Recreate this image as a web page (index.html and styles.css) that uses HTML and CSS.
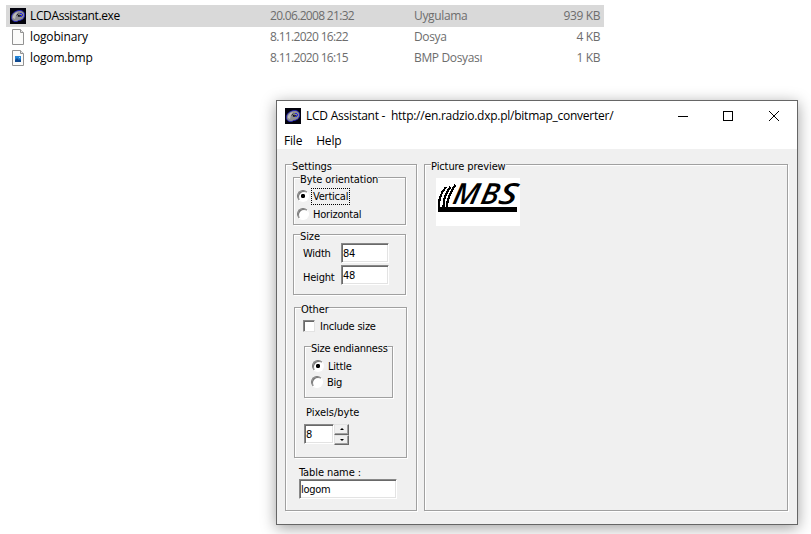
FILE: index.html
```html
<!DOCTYPE html>
<html lang="tr">
<head>
<meta charset="utf-8">
<title>LCD Assistant</title>
<link rel="stylesheet" href="styles.css">
</head>
<body>
<svg width="0" height="0" class="defs">
  <symbol id="app" viewBox="0 0 16 16">
    <path fill="#02020c" d="M0 0h16v16H0z"/>
    <path fill="#8d8d92" stroke="#1d1dcc" stroke-width=".8" d="M1.500 9.500C1.500 5.500 5 3 9 2.500c4-.3 6 2 5.500 5.500-.5 3-3.500 4.500-6 4.500-1 1-3 1.500-5 .5-1.500-.8-2-2-2-3.500z"/>
    <path fill="#bbb" d="M3 8c1-2.500 3-3.500 5-4L6 7l-1 4-2-1z"/>
    <ellipse cx="9" cy="7.300" rx="2.300" ry="1.800" fill="#26262e"/>
    <path fill="none" stroke="#aaa" d="M7.500 8.500c0-2 2.500-3 3.500-1.500"/>
    <path fill="#2525e8" d="M10 5h2v1h-2zM12 6h1v2h-1zM10 8h2v1h-2z"/>
    <path fill="#090912" d="M8 7h1v1H8z"/>
  </symbol>
  <symbol id="page" viewBox="0 0 16 16">
    <path fill="#fbfbfa" stroke="#929292" d="M2.500.5h8l3 3v12h-11z"/>
    <path fill="#e6e6e6" stroke="#929292" d="M10.500.5v3h3"/>
  </symbol>
</svg>

<main class="files">
  <div class="file selected"><svg class="icon"><use href="#app"/></svg><span class="name">LCDAssistant.exe</span><span class="date">20.06.2008 21:32</span><span class="type">Uygulama</span><span class="size">939 KB</span></div>
  <div class="file"><svg class="icon"><use href="#page"/></svg><span class="name">logobinary</span><span class="date">8.11.2020 16:22</span><span class="type">Dosya</span><span class="size">4 KB</span></div>
  <div class="file"><svg class="icon" viewBox="0 0 16 16"><use href="#page"/><path fill="#2383d6" d="M5 6h6v6H5z"/><path fill="#104a91" d="M5 10l2-2 2 2 1-1 1 1v2H5z"/><path fill="#9bdcff" d="M9 7h1v1H9z"/></svg><span class="name">logom.bmp</span><span class="date">8.11.2020 16:15</span><span class="type">BMP Dosyası</span><span class="size">1 KB</span></div>
</main>

<section class="window">
  <header class="titlebar">
    <svg class="icon"><use href="#app"/></svg>
    <span class="title">LCD Assistant -&nbsp; http://en.radzio.dxp.pl/bitmap_converter/</span>
    <svg class="controls" width="102" height="12" viewBox="0 0 102 12" fill="none" stroke="#000"><path d="M0 6.500h10M45.500 1.500h9v9h-9z" shape-rendering="crispEdges"/><path d="M91 1l10 10M101 1L91 11"/></svg>
  </header>
  <nav class="menu"><span>File</span><span>Help</span></nav>
  <div class="client">
    <div class="group settings">
      <div class="legend">Settings</div>
      <div class="group orientation">
        <div class="legend">Byte orientation</div>
        <div class="option vertical"><i class="radio on"></i><span class="focus">Vertical</span></div>
        <div class="option horizontal"><i class="radio"></i><span>Horizontal</span></div>
      </div>
      <div class="group dimensions">
        <div class="legend">Size</div>
        <div class="row w"><span>Width</span><div class="input">84</div></div>
        <div class="row h"><span>Height</span><div class="input">48</div></div>
      </div>
      <div class="group other">
        <div class="legend">Other</div>
        <div class="option include"><i class="check"></i><span>Include size</span></div>
        <div class="group endian">
          <div class="legend tight">Size endianness</div>
          <div class="option little"><i class="radio on"></i><span>Little</span></div>
          <div class="option big"><i class="radio"></i><span>Big</span></div>
        </div>
        <div class="pixels">Pixels/byte</div>
        <div class="spin"><div class="input">8</div><div class="buttons"><i class="btn up"></i><i class="btn down"></i></div></div>
      </div>
      <div class="table-label">Table name :</div>
      <div class="input table-name">logom</div>
    </div>
    <div class="group preview">
      <div class="legend">Picture preview</div>
      <svg class="picture" width="84" height="48" viewBox="0 0 84 48">
        <path fill="#fff" d="M0 0h84v48H0z"/>
        <path d="M2 29h79v5H2z"/>
        <path fill="none" stroke="#000" stroke-width="2.200" shape-rendering="crispEdges" d="M10 9Q2 18 3 30M14.500 9Q7 18 7.500 30M19.500 7Q11 18 11 29"/>
        <text class="mark" transform="translate(5 0) skewX(-12)" y="25.500"><tspan x="16" textLength="26" lengthAdjust="spacingAndGlyphs">M</tspan><tspan x="44">B</tspan><tspan x="62" textLength="18" lengthAdjust="spacingAndGlyphs">S</tspan></text>
      </svg>
    </div>
  </div>
</section>
</body>
</html>
```
FILE: styles.css
```css
* { box-sizing: border-box; }
body { margin: 0; width: 811px; height: 534px; overflow: hidden; background: #fff; font: 12px/16px "Open Sans", "Noto Sans", sans-serif; color: #000; white-space: nowrap; }
.defs { position: absolute; }
.icon { width: 16px; height: 16px; flex: none; }

.files { padding: 5px 0 0 6px; height: 100px; }
.file { display: grid; grid-template-columns: 20px 240px 144px 100px 86px; align-items: center; width: 598px; height: 21px; padding: 0 0 2px 4px; color: #6d6d6d; }
.file.selected { height: 22px; padding-bottom: 0; background: #d9d9d9; }
.name { color: #000; letter-spacing: -.15px; }
.selected .name { letter-spacing: -.37px; }
.date { letter-spacing: -.68px; }
.type { letter-spacing: -.35px; }
.size { text-align: right; letter-spacing: -.4px; }

.window { width: 522px; height: 425px; margin-left: 276px; border: 1px solid #666; background: #fff; box-shadow: 0 3px 14px rgba(0,0,0,.38); }
.titlebar { display: flex; align-items: center; height: 29px; padding-left: 8px; }
.title { margin-left: 5px; flex: 1; letter-spacing: -.25px; }
.controls { margin-right: 17px; }
.menu { display: flex; height: 19px; padding: 3px 0 0 7px; gap: 14px; letter-spacing: -.2px; }
.client { display: flex; gap: 7px; height: 375px; padding: 15px 0 0 8px; background: #f0f0f0; font: 11px/13px "DejaVu Sans Condensed", "DejaVu Sans", sans-serif; letter-spacing: -.1px; }
.group { border: 1px solid #a0a0a0; box-shadow: 1px 1px 0 #fff, inset 1px 1px 0 #fff; }
.legend { width: max-content; height: 13px; margin: -5px 0 0 6px; background: #f0f0f0; }
.tight { letter-spacing: -.22px; }
.settings { width: 132px; height: 347px; }
.orientation { width: 113px; height: 48px; margin: 4px 0 0 7px; }
.dimensions { width: 113px; height: 61px; margin: 9px 0 0 7px; }
.other { width: 113px; height: 151px; margin: 12px 0 0 8px; }
.endian { width: 89px; height: 52px; margin: 13px 0 0 9px; }
.preview { width: 364px; height: 347px; }
.picture { display: block; margin: 5px 0 0 11px; overflow: visible; }
.mark { font: italic 600 29px "Open Sans", sans-serif; letter-spacing: 0; }

.option { display: flex; align-items: center; height: 13px; letter-spacing: -.22px; }
.vertical { margin: 4px 0 0 3px; }
.horizontal { margin: 5px 0 0 3px; }
.include { margin: 4px 0 0 8px; }
.little { margin: 5px 0 0 7px; }
.big { margin: 3px 0 0 6px; }
.radio { width: 12px; height: 12px; margin: -1px 4px 0 0; border: 1px solid; border-color: #777 #fff #fff #777; border-radius: 50%; background: #fff; box-shadow: inset 1px 1px 0 #777; }
.radio.on { background: radial-gradient(circle at 5px 5px, #000 1.900px, #fff 2.400px); }
.focus { outline: 1px dotted #000; outline-offset: 1px; }
.check { width: 12px; height: 12px; margin: -1px 5px 0 0; background: #fff; border: 1px solid; border-color: #888 #e3e3e3 #e3e3e3 #888; box-shadow: inset 1px 1px 0 #696969; }
.row { display: flex; align-items: center; height: 20px; letter-spacing: -.22px; }
.row span { width: 38px; }
.row.w { margin: 0 0 0 9px; }
.row.h { margin: 2px 0 0 9px; }
.row.h span { padding-top: 5px; }
.input { width: 48px; height: 20px; padding: 3px 0 0 1px; background: #fff; border: 1px solid; border-color: #888 #fff #fff #888; box-shadow: inset 1px 1px 0 #696969, inset -1px -1px 0 #e3e3e3; }
.table-name { letter-spacing: -.3px; }
.pixels { margin: 8px 0 0 11px; letter-spacing: 0; }
.spin { display: flex; margin: 5px 0 0 9px; }
.spin .input { width: 30px; }
.buttons { display: flex; flex-direction: column; width: 15px; }
.btn { height: 10.500px; display: grid; place-items: center; border: 1px solid; border-color: #e3e3e3 #696969 #696969 #e3e3e3; box-shadow: inset -1px -1px 0 #a0a0a0; }
.btn::before { content: ""; border: 2px solid transparent; }
.up::before { border-bottom-color: #000; border-top: 0; }
.down::before { border-top-color: #000; border-bottom: 0; }
.table-label { margin: 8px 0 0 13px; }
.table-name { width: 98px; margin: 0 0 0 13px; }
```
